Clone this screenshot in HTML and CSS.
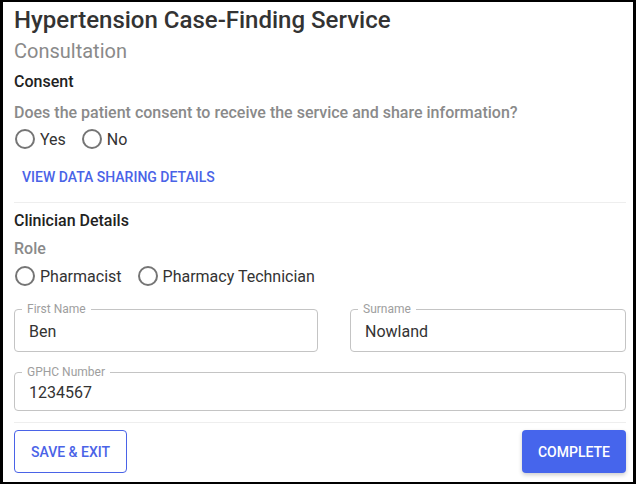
FILE: index.html
```html
<!DOCTYPE html>
<html lang="en">
<head>
    <meta charset="UTF-8">
    <meta name="viewport" content="width=device-width, initial-scale=1.0">
    <title>Hypertension Case-Finding Service</title>
    <link rel="stylesheet" href="styles.css">
</head>
<body>
    <div class="frame">
        <h1 class="title">Hypertension Case-Finding Service</h1>
        <h2 class="subtitle">Consultation</h2>

        <h3 class="section">Consent</h3>
        <p class="question">Does the patient consent to receive the service and share information?</p>
        <div class="radio-row">
            <label class="radio"><span class="dot"></span>Yes</label>
            <label class="radio"><span class="dot"></span>No</label>
        </div>
        <button class="link-btn">VIEW DATA SHARING DETAILS</button>

        <hr class="divider">

        <h3 class="section section-clinician">Clinician Details</h3>
        <p class="question question-role">Role</p>
        <div class="radio-row radio-row-role">
            <label class="radio"><span class="dot"></span>Pharmacist</label>
            <label class="radio"><span class="dot"></span>Pharmacy Technician</label>
        </div>

        <div class="name-row">
            <fieldset class="field">
                <legend>First Name</legend>
                <span class="value">Ben</span>
            </fieldset>
            <fieldset class="field">
                <legend>Surname</legend>
                <span class="value">Nowland</span>
            </fieldset>
        </div>
        <fieldset class="field field-gphc">
            <legend>GPHC Number</legend>
            <span class="value">1234567</span>
        </fieldset>

        <hr class="divider divider-bottom">

        <div class="actions">
            <button class="btn btn-outline">SAVE &amp; EXIT</button>
            <button class="btn btn-primary">COMPLETE</button>
        </div>
    </div>
</body>
</html>
```

FILE: styles.css
```css
* {
    box-sizing: border-box;
}
body {
    margin: 0;
    font-family: Roboto, "Liberation Sans", sans-serif;
    background-color: #fff;
}
.frame {
    width: 636px;
    height: 484px;
    border: solid #000;
    border-width: 2px 3px 2px 3px;
    padding: 4px 7px 0 11px;
    overflow: hidden;
}
.title {
    margin: 0;
    font-size: 24px;
    line-height: 28px;
    font-weight: 500;
    color: #333;
}
.subtitle {
    margin: 5px 0 0;
    font-size: 20px;
    line-height: 24px;
    font-weight: 400;
    color: #8a8a8a;
}
.section {
    margin: 8px 0 0;
    font-size: 16px;
    line-height: 22px;
    font-weight: 500;
    color: #222;
}
.question {
    margin: 9px 0 0;
    font-size: 16px;
    line-height: 22px;
    font-weight: 500;
    color: #8a8a8a;
}
.radio-row {
    display: flex;
    gap: 15px;
    margin-top: 3px;
    height: 24px;
    align-items: center;
}
.radio-row-role {
    margin-top: 4px;
}
.radio {
    display: flex;
    align-items: center;
    gap: 5px;
    font-size: 16px;
    color: #333;
}
.dot {
    width: 20px;
    height: 20px;
    border: 2px solid #757575;
    border-radius: 50%;
    margin-left: 1px;
}
.link-btn {
    display: block;
    margin-top: 16px;
    padding: 0 8px;
    height: 20px;
    border: none;
    background: none;
    font-family: inherit;
    font-size: 14px;
    font-weight: 500;
    color: #4a63e7;
}
.divider {
    margin: 15px 0 0;
    border: none;
    border-top: 1px solid #eee;
}
.section-clinician {
    margin-top: 7px;
}
.question-role {
    margin-top: 6px;
}
.name-row {
    display: grid;
    grid-template-columns: 304px 1fr;
    gap: 32px;
    margin-top: 13px;
}
.field {
    margin: 0;
    height: 51px;
    padding: 0 0 0 14px;
    border: 1px solid #c4c4c4;
    border-radius: 4px;
    display: flex;
    align-items: center;
}
.field legend {
    margin-left: -7px;
    padding: 0 5px;
    font-size: 12px;
    line-height: 16px;
    color: #9e9e9e;
}
.value {
    font-size: 16px;
    color: #333;
    margin-top: -6px;
}
.field-gphc {
    margin-top: 12px;
    height: 47px;
}
.divider-bottom {
    margin-top: 11px;
}
.actions {
    display: flex;
    justify-content: space-between;
    margin-top: 7px;
}
.btn {
    height: 43px;
    padding: 0 16px;
    border-radius: 4px;
    font-family: inherit;
    font-size: 14px;
    font-weight: 500;
}
.btn-outline {
    background: #fff;
    border: 1px solid #4a63e7;
    color: #4a63e7;
}
.btn-primary {
    background: #4665ec;
    border: none;
    color: #fff;
    box-shadow: 0 2px 4px rgba(0, 0, 0, 0.2);
}
```
